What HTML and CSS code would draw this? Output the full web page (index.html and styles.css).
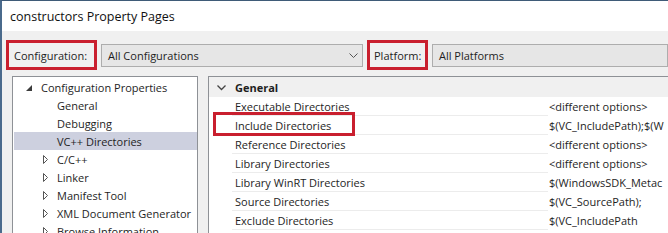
FILE: index.html
```html
<!DOCTYPE html>
<html>
<head>
<meta charset="utf-8">
<link rel="stylesheet" href="styles.css">
</head>
<body>
<div class="window">
  <div class="titlebar">constructors Property Pages</div>
  <div class="client">
    <div class="toolbar">
      <div class="label mark config-label">Configuration:</div>
      <div class="combo config-combo">
        <span>All Configurations</span>
        <svg class="chev" width="9" height="6" viewBox="0 0 9 6"><path d="M0.5 0.5 L4.5 4.5 L8.5 0.5" fill="none" stroke="#555" stroke-width="1"/></svg>
      </div>
      <div class="label mark platform-label">Platform:</div>
      <div class="combo platform-combo"><span>All Platforms</span></div>
    </div>
    <div class="panels">
      <div class="tree">
        <div class="trow root">
          <svg class="tri-open" width="6" height="6" viewBox="0 0 6 6"><path d="M6 0 L6 6 L0 6 Z" fill="#3c3c3c"/></svg>
          <span>Configuration Properties</span>
        </div>
        <div class="trow leaf">General</div>
        <div class="trow leaf">Debugging</div>
        <div class="trow leaf selected">VC++ Directories</div>
        <div class="trow branch"><svg class="tri" width="5" height="9" viewBox="0 0 5 9"><path d="M0.5 0.5 L4.5 4.5 L0.5 8.5 Z" fill="none" stroke="#555" stroke-width="1"/></svg><span>C/C++</span></div>
        <div class="trow branch"><svg class="tri" width="5" height="9" viewBox="0 0 5 9"><path d="M0.5 0.5 L4.5 4.5 L0.5 8.5 Z" fill="none" stroke="#555" stroke-width="1"/></svg><span>Linker</span></div>
        <div class="trow branch"><svg class="tri" width="5" height="9" viewBox="0 0 5 9"><path d="M0.5 0.5 L4.5 4.5 L0.5 8.5 Z" fill="none" stroke="#555" stroke-width="1"/></svg><span>Manifest Tool</span></div>
        <div class="trow branch"><svg class="tri" width="5" height="9" viewBox="0 0 5 9"><path d="M0.5 0.5 L4.5 4.5 L0.5 8.5 Z" fill="none" stroke="#555" stroke-width="1"/></svg><span>XML Document Generator</span></div>
        <div class="trow branch"><svg class="tri" width="5" height="9" viewBox="0 0 5 9"><path d="M0.5 0.5 L4.5 4.5 L0.5 8.5 Z" fill="none" stroke="#555" stroke-width="1"/></svg><span>Browse Information</span></div>
      </div>
      <div class="grid">
        <div class="ghead">
          <svg class="gchev" width="9" height="6" viewBox="0 0 9 6"><path d="M0.5 0.5 L4.5 4.5 L8.5 0.5" fill="none" stroke="#444" stroke-width="1.3"/></svg>
          <span>General</span>
        </div>
        <div class="grow"><div class="gname">Executable Directories</div><div class="gval">&lt;different options&gt;</div></div>
        <div class="grow"><div class="gname">Include Directories<div class="hilite"></div></div><div class="gval">$(VC_IncludePath);$(W</div></div>
        <div class="grow"><div class="gname">Reference Directories</div><div class="gval">&lt;different options&gt;</div></div>
        <div class="grow"><div class="gname">Library Directories</div><div class="gval">&lt;different options&gt;</div></div>
        <div class="grow"><div class="gname">Library WinRT Directories</div><div class="gval">$(WindowsSDK_Metac</div></div>
        <div class="grow"><div class="gname">Source Directories</div><div class="gval">$(VC_SourcePath);</div></div>
        <div class="grow"><div class="gname">Exclude Directories</div><div class="gval">$(VC_IncludePath</div></div>
      </div>
    </div>
  </div>
</div>
</body>
</html>
```

FILE: styles.css
```css
html, body {
  margin: 0;
  padding: 0;
  overflow: hidden;
  background: #f0f0f0;
}
body {
  font-family: "Open Sans", "Noto Sans", sans-serif;
  font-size: 11px;
  color: #1e1e1e;
}
.window {
  width: 668px;
  height: 233px;
  border-top: 1px solid #3f5b78;
  border-left: 2px solid #4a6a8c;
  box-sizing: border-box;
  display: flex;
  flex-direction: column;
  overflow: hidden;
}
.titlebar {
  flex: 0 0 30px;
  height: 30px;
  background: #fff;
  display: flex;
  align-items: center;
  padding-left: 8px;
  font-size: 12.5px;
  color: #111;
}
.client {
  flex: 1 1 auto;
  min-height: 0;
  background: #f0f0f0;
  display: flex;
  flex-direction: column;
}
.toolbar {
  flex: 0 0 30px;
  display: flex;
  align-items: center;
  height: 30px;
  margin-top: 9px;
  padding-left: 4px;
}
.mark {
  flex: 0 0 auto;
  border: 3px solid #c91f2e;
  box-sizing: border-box;
  height: 30px;
  display: flex;
  align-items: center;
}
.config-label {
  width: 91px;
  padding-left: 5px;
}
.platform-label {
  width: 61px;
  padding-left: 4px;
  margin-left: 4px;
}
.combo {
  flex: 0 0 auto;
  height: 23px;
  box-sizing: border-box;
  border: 1px solid #adadad;
  background: #e6e6e6;
  display: flex;
  align-items: center;
  padding-left: 6px;
  margin-left: 4px;
}
.config-combo {
  width: 262px;
  justify-content: space-between;
  padding-right: 4px;
}
.chev { margin-top: 1px; }
.platform-combo {
  flex: 1 1 auto;
}
.panels {
  display: flex;
  margin-top: 6px;
  flex: 1 1 auto;
  min-height: 0;
  align-items: stretch;
}
.tree {
  flex: 0 0 186px;
  width: 186px;
  margin-left: 10px;
  background: #fff;
  border: 1px solid #8e9196;
  border-bottom: none;
  box-sizing: border-box;
  padding-top: 1px;
  padding-left: 1px;
}
.trow {
  height: 18px;
  display: flex;
  align-items: center;
  white-space: nowrap;
}
.root { padding-left: 12px; }
.tri-open { margin-right: 9px; margin-top: 1px; }
.leaf { padding-left: 43px; }
.selected { background: #cdd0df; }
.branch { padding-left: 29px; }
.tri { margin-right: 9px; }
.grid {
  flex: 1 1 auto;
  margin-left: 10px;
  background: #fff;
  border: 1px solid #8e9196;
  border-bottom: none;
  border-right: none;
  box-sizing: border-box;
}
.ghead {
  height: 20px;
  background: #f0f0f0;
  display: flex;
  align-items: center;
  font-weight: bold;
  padding-left: 8px;
  padding-top: 1px;
  box-sizing: border-box;
}
.gchev { margin-right: 9px; }
.grow {
  height: 19px;
  display: flex;
  margin-left: 23px;
}
.gname {
  flex: 0 0 316px;
  width: 316px;
  position: relative;
  display: flex;
  align-items: center;
  padding-left: 3px;
  border-bottom: 1px solid #ececec;
  box-sizing: border-box;
  white-space: nowrap;
}
.gval {
  flex: 1 1 auto;
  display: flex;
  align-items: center;
  padding-left: 1px;
  white-space: nowrap;
  overflow: hidden;
}
.hilite {
  position: absolute;
  left: -19px;
  top: -4px;
  width: 142px;
  height: 24px;
  border: 3px solid #c91f2e;
  box-sizing: border-box;
}
```
